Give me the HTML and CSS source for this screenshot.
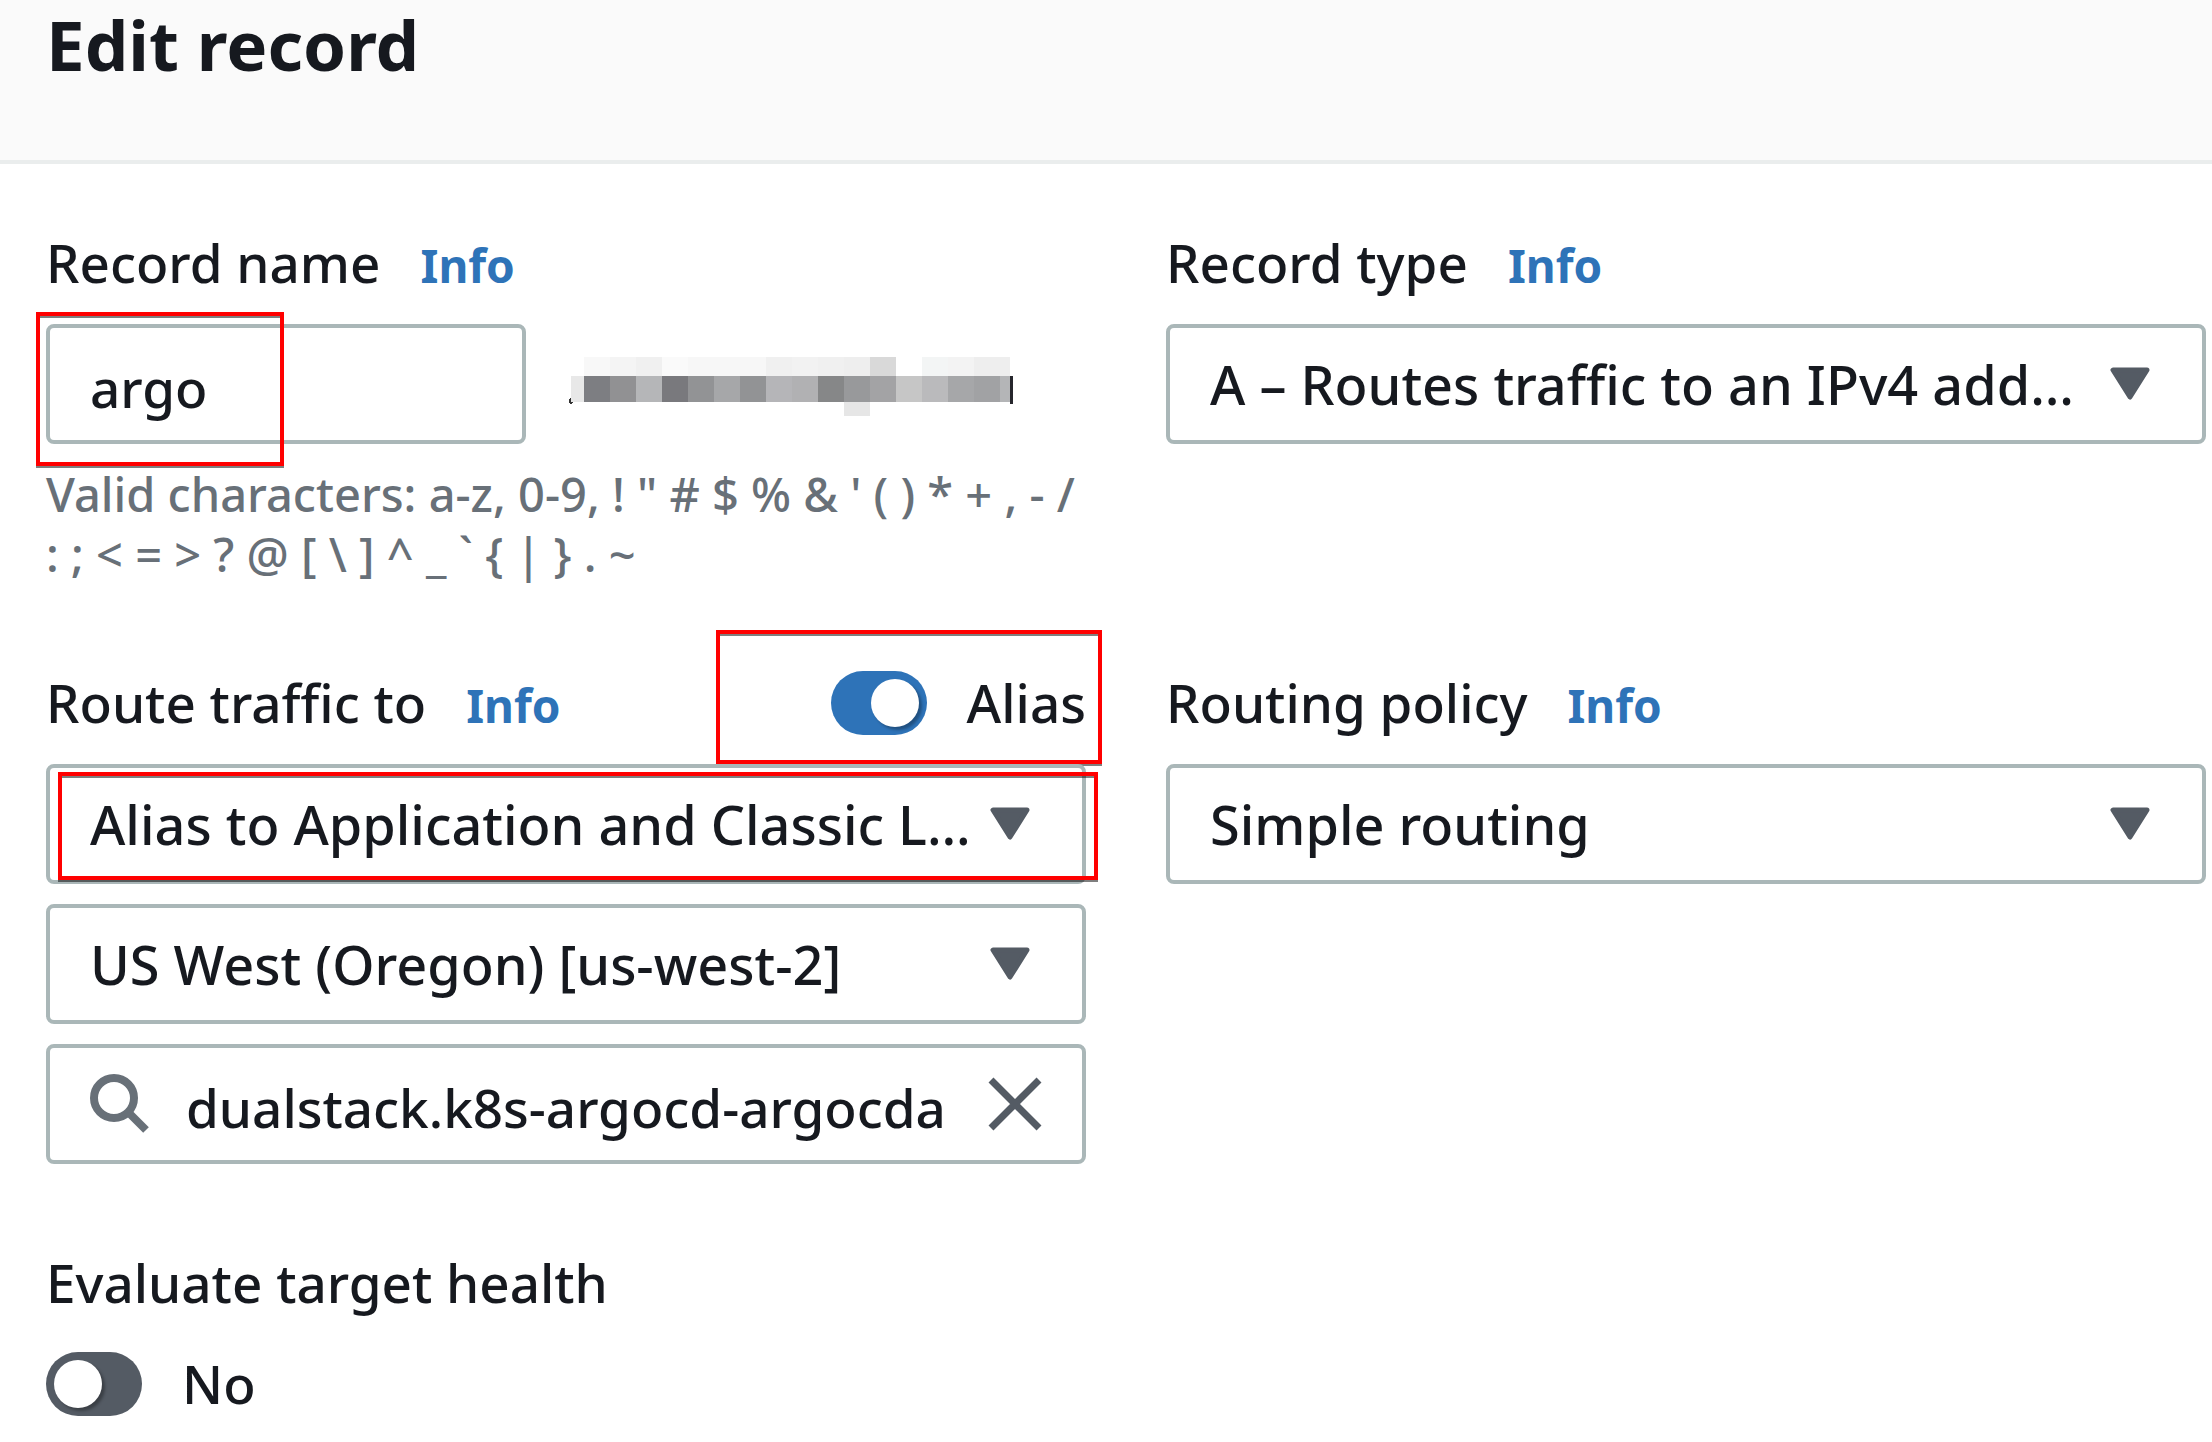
FILE: index.html
```html
<!DOCTYPE html>
<html lang="en">
<head>
<meta charset="utf-8">
<title>Edit record</title>
<meta name="viewport" content="width=device-width, initial-scale=1">
<link rel="stylesheet" href="styles.css">
</head>
<body>
<header class="header">
  <h1 class="title">Edit record</h1>
</header>
<main>
  <form class="form">
    <section class="field">
      <div class="label-row">
        <label class="label" for="record-name">Record name</label>
        <a class="info" href="#record-name">Info</a>
      </div>
      <div class="name-row">
        <div class="name-box">
          <input class="control" id="record-name" type="text" value="argo">
          <span class="mark mark-name"></span>
        </div>
        <svg class="redacted" width="444" height="60" viewBox="0 0 444 60" shape-rendering="crispEdges" aria-hidden="true">
          <ellipse cx="2" cy="44" rx="2" ry="3" fill="#333"/>
          <rect x="2" y="19" width="13" height="26" fill="#e8e8e8"/>
          <g>
            <rect x="15" y="0" width="26" height="19" fill="#f8f8f8"/>
            <rect x="41" y="0" width="26" height="19" fill="#f4f4f4"/>
            <rect x="67" y="0" width="26" height="19" fill="#f0f0f0"/>
            <rect x="93" y="0" width="26" height="19" fill="#fafafa"/>
            <rect x="119" y="0" width="78" height="19" fill="#f7f7f7"/>
            <rect x="197" y="0" width="26" height="19" fill="#f0f0f0"/>
            <rect x="223" y="0" width="26" height="19" fill="#f2f2f2"/>
            <rect x="249" y="0" width="26" height="19" fill="#f0f0f0"/>
            <rect x="275" y="0" width="26" height="19" fill="#eeeeee"/>
            <rect x="301" y="0" width="26" height="19" fill="#d9d9d9"/>
            <rect x="353" y="0" width="26" height="19" fill="#f3f5f5"/>
            <rect x="379" y="0" width="26" height="19" fill="#f3f3f3"/>
            <rect x="405" y="0" width="36" height="19" fill="#eeeeee"/>
          </g>
          <g>
            <rect x="15" y="19" width="26" height="26" fill="#7d7e82"/>
            <rect x="41" y="19" width="26" height="26" fill="#919193"/>
            <rect x="67" y="19" width="26" height="26" fill="#b5b6b8"/>
            <rect x="93" y="19" width="26" height="26" fill="#79797d"/>
            <rect x="119" y="19" width="26" height="26" fill="#929395"/>
            <rect x="145" y="19" width="26" height="26" fill="#a6a7a9"/>
            <rect x="171" y="19" width="26" height="26" fill="#929395"/>
            <rect x="197" y="19" width="26" height="26" fill="#b5b5b8"/>
            <rect x="223" y="19" width="26" height="26" fill="#b1b1b3"/>
            <rect x="249" y="19" width="26" height="26" fill="#868788"/>
            <rect x="275" y="19" width="26" height="26" fill="#98999b"/>
            <rect x="301" y="19" width="26" height="26" fill="#a3a3a5"/>
            <rect x="327" y="19" width="26" height="26" fill="#c6c6c6"/>
            <rect x="353" y="19" width="26" height="26" fill="#bababc"/>
            <rect x="379" y="19" width="26" height="26" fill="#a6a7a9"/>
            <rect x="405" y="19" width="26" height="26" fill="#a1a2a4"/>
            <rect x="431" y="19" width="10" height="26" fill="#b4b5b7"/>
          </g>
          <rect x="275" y="45" width="26" height="14" fill="#e6e6e6"/>
          <rect x="441" y="19" width="3" height="28" fill="#26262c"/>
        </svg>
      </div>
      <p class="hint">Valid characters: a-z, 0-9, ! " # $ % &amp; ' ( ) * + , - / : ; &lt; = &gt; ? @ [ \ ] ^ _ ` { | } . ~</p>
    </section>

    <section class="field">
      <div class="label-row">
        <label class="label" for="record-type">Record type</label>
        <a class="info" href="#record-type">Info</a>
      </div>
      <div class="select-box">
        <select class="control" id="record-type"><option>A – Routes traffic to an IPv4 add…</option></select>
        <svg class="caret" viewBox="0 0 40 33" aria-hidden="true"><path d="M3 3H37L20 30Z"/></svg>
      </div>
    </section>

    <section class="field">
      <div class="label-row">
        <label class="label" for="route-to">Route traffic to</label>
        <a class="info" href="#route-to">Info</a>
        <label class="switch switch-alias"><input class="toggle" type="checkbox" role="switch" checked>Alias<span class="mark mark-alias"></span></label>
      </div>
      <div class="stack">
        <div class="select-box">
          <select class="control" id="route-to"><option>Alias to Application and Classic L…</option></select>
          <svg class="caret" viewBox="0 0 40 33" aria-hidden="true"><path d="M3 3H37L20 30Z"/></svg>
          <span class="mark mark-route"></span>
        </div>
        <div class="select-box">
          <select class="control" aria-label="Region"><option>US West (Oregon) [us-west-2]</option></select>
          <svg class="caret" viewBox="0 0 40 33" aria-hidden="true"><path d="M3 3H37L20 30Z"/></svg>
        </div>
        <div class="search-box">
          <svg class="search-icon" viewBox="0 0 60 60" aria-hidden="true"><circle cx="24" cy="24" r="20"/><path d="M38 38L56 56"/></svg>
          <input class="search-input" type="text" aria-label="Load balancer" value="dualstack.k8s-argocd-argocda">
          <button class="clear" type="button" aria-label="Clear"><svg viewBox="0 0 54 54" aria-hidden="true"><path d="M3 3L51 51M51 3L3 51"/></svg></button>
        </div>
      </div>
    </section>

    <section class="field">
      <div class="label-row">
        <label class="label" for="policy">Routing policy</label>
        <a class="info" href="#policy">Info</a>
      </div>
      <div class="select-box">
        <select class="control" id="policy"><option>Simple routing</option></select>
        <svg class="caret" viewBox="0 0 40 33" aria-hidden="true"><path d="M3 3H37L20 30Z"/></svg>
      </div>
    </section>

    <section class="field health">
      <span class="label" id="health-label">Evaluate target health</span>
      <label class="switch"><input class="toggle" type="checkbox" role="switch" aria-describedby="health-label">No</label>
    </section>
  </form>
</main>
</body>
</html>
```
FILE: styles.css
```css
* {
  box-sizing: border-box;
}

body {
  margin: 0;
  background: #fff;
  color: #16191f;
  font: 500 53px/60px "Noto Sans", sans-serif;
}

.header {
  padding: 0 46px 72px;
  background: #fafafa;
  border-bottom: 4px solid #eaeded;
}

.title {
  margin: 0;
  font-size: 69px;
  line-height: 88px;
  font-weight: 700;
}

.form {
  display: grid;
  grid-template-columns: 1fr 1fr;
  gap: 89px 80px;
  padding: 69px 6px 26px 46px;
}

.field {
  min-width: 0;
}

.label-row {
  display: flex;
  align-items: baseline;
  gap: 40px;
  height: 60px;
  margin-bottom: 31px;
}

.info {
  color: #2e73b8;
  font-size: 46px;
  font-weight: 700;
  text-decoration: none;
}

.control {
  display: block;
  width: 100%;
  height: 120px;
  margin: 0;
  padding: 0 40px;
  border: 4px solid #aab7b8;
  border-radius: 8px;
  background: #fff;
  color: inherit;
  font: inherit;
  appearance: none;
}

select.control {
  font-size: 54px;
  line-height: 80px;
}

input.control {
  padding-top: 6px;
}

.name-row {
  display: flex;
  align-items: center;
  gap: 43px;
}

.name-box {
  position: relative;
  width: 480px;
}

.redacted {
  flex: none;
  margin-top: 6px;
}

.hint {
  margin: 20px 0 0;
  color: #687078;
  font-size: 47px;
}

.select-box {
  position: relative;
}

.caret {
  position: absolute;
  right: 56px;
  top: 43px;
  width: 40px;
  height: 33px;
  fill: #545b64;
  stroke: #545b64;
  stroke-width: 5;
  stroke-linejoin: round;
  pointer-events: none;
}

.stack {
  display: grid;
  grid-template-columns: minmax(0, 1fr);
  gap: 20px;
}

.search-box {
  display: flex;
  align-items: center;
  height: 120px;
  padding: 0 40px;
  border: 4px solid #aab7b8;
  border-radius: 8px;
}

.search-icon {
  flex: none;
  width: 60px;
  height: 60px;
  fill: none;
  stroke: #687078;
  stroke-width: 8;
}

.search-input {
  flex: 1;
  min-width: 0;
  height: 112px;
  margin: 0 40px 0 36px;
  padding: 6px 0 0;
  border: 0;
  background: none;
  color: inherit;
  font: inherit;
}

.clear {
  flex: none;
  width: 54px;
  height: 54px;
  margin: 0;
  padding: 0;
  border: 0;
  background: none;
}

.clear svg {
  display: block;
  fill: none;
  stroke: #545b64;
  stroke-width: 7;
}

.switch {
  display: flex;
  align-items: center;
  gap: 40px;
  height: 64px;
}

.switch-alias {
  position: relative;
  align-self: center;
  margin-left: auto;
}

.toggle {
  flex: none;
  width: 96px;
  height: 64px;
  margin: 0;
  padding: 8px;
  border-radius: 32px;
  background: #545b64;
  appearance: none;
}

.toggle::before {
  content: "";
  display: block;
  width: 48px;
  height: 48px;
  border-radius: 50%;
  background: #fff;
  box-shadow: 3px 3px 3px rgba(0, 0, 0, 0.3);
}

.toggle:checked {
  background: #2e73b8;
}

.toggle:checked::before {
  margin-left: auto;
}

.health {
  display: grid;
  gap: 39px;
}

/* Red annotation frames over the highlighted controls */
.mark {
  position: absolute;
  border: 4px solid #f00;
  box-shadow: 0 2px 0 rgba(0, 0, 0, 0.5), inset 0 2px 0 rgba(0, 0, 0, 0.5);
  pointer-events: none;
}

.mark-name {
  inset: -12px 242px -22px -10px;
}

.mark-alias {
  inset: -41px -16px -29px -115px;
}

.mark-route {
  inset: 8px -12px 4px 12px;
}
```
